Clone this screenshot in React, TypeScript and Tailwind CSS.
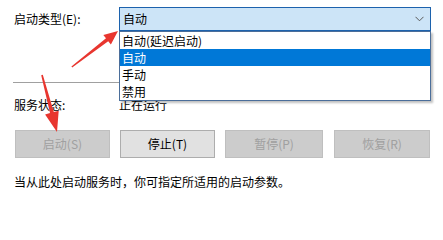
import React from "react";

const font = { fontFamily: '"Noto Sans CJK SC", "Noto Sans", sans-serif' };

const options = ["自动(延迟启动)", "自动", "手动", "禁用"];

function Chevron() {
  return (
    <svg width="9" height="6" viewBox="0 0 9 6" className="shrink-0">
      <path d="M0.5 0.8 L4.5 4.8 L8.5 0.8" fill="none" stroke="#5a5a5a" strokeWidth="1" />
    </svg>
  );
}

function Arrows() {
  return (
    <svg
      width="443"
      height="215"
      viewBox="0 0 443 215"
      className="pointer-events-none absolute left-0 top-0"
    >
      <polygon
        fill="#e8362f"
        points="72.2,67.5 108.2,41.2 110.9,44.4 118,31 103.3,35.1 106,38.3 71.4,66.5"
      />
      <polygon
        fill="#e8362f"
        points="42.8,74.8 53.8,112.1 58.7,110.8 57,132 45.1,114.4 50,113.1 41.2,75.2"
      />
    </svg>
  );
}

export default function App() {
  return (
    <div
      className="relative flex h-[215px] w-[443px] flex-col overflow-hidden bg-white pl-[14px] text-[12px] leading-[14px] text-black"
      style={font}
    >
      <div className="mt-[7px] flex h-[24px] items-center">
        <span className="w-[105px]">启动类型(E):</span>
        <div className="relative h-[24px] w-[312px]">
          <div className="flex h-full items-center justify-between border border-[#1c62ad] bg-[#cce4f7] pl-[3px] pr-[6px]">
            <span>自动</span>
            <Chevron />
          </div>
          <div className="absolute left-0 top-[24px] z-10 flex h-[70px] w-[312px] flex-col border border-[#4b6e9a] bg-white shadow-[2px_2px_2px_rgba(0,0,0,0.25)]">
            {options.map((o) => (
              <div
                key={o}
                className={
                  o === "自动"
                    ? "flex h-[17px] items-center bg-[#0078d7] pl-[2px] text-white"
                    : "flex h-[17px] items-center pl-[2px]"
                }
              >
                {o}
              </div>
            ))}
          </div>
        </div>
      </div>

      <div className="ml-[-1px] mt-[51px] h-px w-[418px] bg-[#a0a0a0]" />

      <div className="mt-[14px] flex h-[16px] items-center">
        <span className="w-[105px]">服务状态:</span>
        <span>正在运行</span>
      </div>

      <div className="ml-[1px] mt-[17px] flex h-[28px] gap-[10px]">
        <button className="h-full w-[95px] border border-[#bfbfbf] bg-[#cccccc] text-[#a0a0a0]">
          启动(S)
        </button>
        <button className="h-full w-[95px] border border-[#adadad] bg-[#e1e1e1] text-black">
          停止(T)
        </button>
        <button className="h-full w-[98px] border border-[#bfbfbf] bg-[#cccccc] text-[#a0a0a0]">
          暂停(P)
        </button>
        <button className="ml-[1px] h-full w-[96px] border border-[#bfbfbf] bg-[#cccccc] text-[#a0a0a0]">
          恢复(R)
        </button>
      </div>

      <div className="mt-[17px]">当从此处启动服务时，你可指定所适用的启动参数。</div>

      <Arrows />
    </div>
  );
}
